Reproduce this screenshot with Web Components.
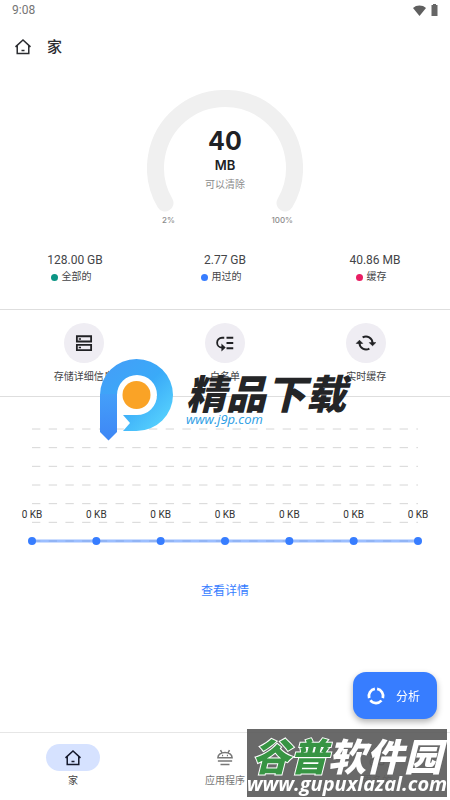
<!DOCTYPE html>
<html lang="zh-CN">
<head>
<meta charset="utf-8">
<meta name="viewport" content="width=device-width, initial-scale=1">
<title>家</title>
<style>
body {
  margin: 0;
  background: #fff;
  color: #444548;
  font-family: Roboto, "Noto Sans CJK SC", sans-serif;
  font-size: 10px;
}
</style>
</head>
<body>
<clean-app></clean-app>

<script>
// icons, all drawn on a 24 grid
const icons = {
  home: '<path d="M2 11.8 12 2.600l10 9.200M4.300 10v10.800h15.400V10M10 16.600h4"/>',
  storage: '<path d="M2.500 3h19v7h-19zM2.500 14.500h19v7h-19z" stroke-width="2.400"/><path d="M5 6.500h3M5 18h3"/>',
  list: '<path d="M14 5h9M14 12h9M14 19h9M11 5H8a6.500 6.500 0 0 0 0 13h1" stroke-width="2.400"/><path d="m8 14.500 3.800 3.500L8 21.500z" fill="currentColor" stroke-width="1.500"/>',
  sync: '<path d="M7.500 4.600A8.700 8.700 0 0 1 20.700 12M16.500 19.400A8.700 8.700 0 0 1 3.300 12" stroke-width="2.600"/><path d="m16.500 11.500 4.200 4.200 4.200-4.200zM-.9 12.500l4.200-4.200 4.200 4.200z" fill="currentColor" stroke-width="1"/>',
  android: '<path d="M2.500 11.500a9.500 7 0 0 1 19 0zM6 1.500l2 3.600M18 1.500l-2 3.600M2.500 16h19M6 20.800h12" stroke-width="2"/><path d="M8 8.500h1.500M14.500 8.500H16"/>',
  more: '<rect x="3" y="3" width="7" height="7" rx="2"/><rect x="14" y="3" width="7" height="7" rx="2"/><rect x="3" y="14" width="7" height="7" rx="2"/><rect x="14" y="14" width="7" height="7" rx="2"/>',
  ring: '<path d="M13.500 2.600A9.500 9.500 0 0 1 21.100 14.700M19.300 18A9.500 9.500 0 0 1 4.500 17.700M2.900 14.800A9.500 9.500 0 0 1 10.500 2.600" stroke-width="3.600"/>'
};

class AppIcon extends HTMLElement {
  constructor() {
    super();
    const shadow = this.attachShadow({ mode: 'open' });
    shadow.innerHTML = `
      <style>
        :host { display: block; width: 18px; height: 18px; }
        svg { display: block; width: 100%; height: 100%; overflow: visible; }
      </style>
      <svg viewBox="0 0 24 24" fill="none" stroke="currentColor" stroke-width="2" aria-hidden="true">${icons[this.getAttribute('name')]}</svg>
    `;
  }
}

class StatusBar extends HTMLElement {
  constructor() {
    super();
    const shadow = this.attachShadow({ mode: 'open' });
    shadow.innerHTML = `
      <style>
        :host {
          display: flex;
          align-items: center;
          justify-content: space-between;
          height: 20px;
          padding: 0 12px;
          color: #757575;
          font-size: 12px;
        }
        div { display: flex; align-items: center; gap: 5px; }
        svg { display: block; }
      </style>
      <span><slot></slot></span>
      <div>
        <svg width="13" height="11" viewBox="0 0 13 11" fill="#5f5f5f"><path d="M0 3C3.500-.3 9.500-.3 13 3L6.500 11z"/></svg>
        <svg width="7" height="12" viewBox="0 0 7 12" fill="#666"><path d="M2 0h3v1h1.500v11h-6V1H2z"/></svg>
      </div>
    `;
  }
}

class PageTitle extends HTMLElement {
  constructor() {
    super();
    const shadow = this.attachShadow({ mode: 'open' });
    shadow.innerHTML = `
      <style>
        :host { display: flex; align-items: center; gap: 15px; height: 54px; padding: 0 14px; color: #2b2c30; }
        h1 { margin: 0; font-size: 15px; font-weight: 500; line-height: 20px; }
      </style>
      <app-icon name="home"></app-icon>
      <h1><slot></slot></h1>
    `;
  }
}

class CleanGauge extends HTMLElement {
  constructor() {
    super();
    const shadow = this.attachShadow({ mode: 'open' });
    shadow.innerHTML = `
      <style>
        :host { display: block; width: 156px; margin: 16px auto 27px; }
        .dial { display: grid; text-align: center; }
        .dial > * { grid-area: 1 / 1; }
        svg { display: block; width: 100%; }
        .value { display: flex; flex-direction: column; padding-top: 35px; }
        .value b { font: 700 25px/32px Inter, sans-serif; color: #202124; }
        .value strong { font: 600 13px/17px Inter, sans-serif; color: #202124; }
        .value span { line-height: 22px; color: #8c8c8c; }
        .range {
          display: flex;
          justify-content: space-between;
          padding: 3px 10px 0 15px;
          font: 500 8px/10px Inter, sans-serif;
          color: #8c8c8c;
        }
      </style>
      <div class="dial">
        <svg viewBox="0 0 156 122" fill="none" stroke="#f0f0f0" stroke-width="17" stroke-linecap="round">
          <path d="M18 113A69.500 69.500 0 1 1 138 113"/>
        </svg>
        <div class="value"><b>40</b><strong>MB</strong><span>可以清除</span></div>
      </div>
      <div class="range"><span>2%</span><span>100%</span></div>
    `;
  }
}

class StorageStat extends HTMLElement {
  constructor() {
    super();
    const shadow = this.attachShadow({ mode: 'open' });
    shadow.innerHTML = `
      <style>
        :host { display: flex; flex-direction: column; align-items: center; gap: 1px; line-height: 16px; }
        .size { font-size: 12px; }
        .name { display: flex; align-items: center; gap: 4px; padding-right: 8px; }
        i { width: 7px; height: 7px; border-radius: 50%; background: var(--dot); }
      </style>
      <span class="size">${this.getAttribute('size')}</span>
      <span class="name"><i></i><slot></slot></span>
    `;
  }
}

class QuickAction extends HTMLElement {
  constructor() {
    super();
    const shadow = this.attachShadow({ mode: 'open' });
    shadow.innerHTML = `
      <style>
        :host { display: grid; justify-items: center; }
        button {
          display: grid;
          justify-items: center;
          gap: 6px;
          padding: 0;
          border: 0;
          background: none;
          color: inherit;
          font: inherit;
          line-height: 16px;
        }
        .disc { display: grid; place-items: center; width: 40px; height: 40px; border-radius: 50%; background: #efedf3; color: #202124; }
      </style>
      <button type="button">
        <span class="disc"><app-icon name="${this.getAttribute('icon')}"></app-icon></span>
        <slot></slot>
      </button>
    `;
  }
}

class UsageChart extends HTMLElement {
  constructor() {
    super();
    const shadow = this.attachShadow({ mode: 'open' });
    const values = this.getAttribute('values').split(',');
    let grid = '';
    let points = '';
    values.forEach((value, i) => {
      const pos = i / (values.length - 1) * 100 + '%';
      grid += `<line x1="0" x2="100%" y1="${pos}" y2="${pos}" pathLength="231" stroke-dasharray="5 5"/>`;
      points += `<circle cx="${pos}" cy="100%" r="4"/><text x="${pos}" y="89">${value} KB</text>`;
    });
    shadow.innerHTML = `
      <style>
        :host { display: block; padding: 32px 32px 0; }
        svg { display: block; width: 100%; height: 112px; overflow: visible; }
        .grid { stroke: #d6d6d6; stroke-width: 1; }
        .series { stroke: #377dff; stroke-opacity: .5; stroke-width: 3; }
        circle { fill: #377dff; }
        text { fill: #333; font-size: 10px; text-anchor: middle; }
      </style>
      <svg>
        <g class="grid">${grid}</g>
        <line class="series" x1="0" x2="100%" y1="100%" y2="100%"/>
        ${points}
      </svg>
    `;
  }
}

class AnalyzeButton extends HTMLElement {
  constructor() {
    super();
    const shadow = this.attachShadow({ mode: 'open' });
    shadow.innerHTML = `
      <style>
        /* floats over the page, just above the bottom bar */
        :host { display: block; position: fixed; right: 13px; bottom: 81px; }
        button {
          display: flex;
          align-items: center;
          gap: 11px;
          height: 47px;
          padding: 0 17px 0 14px;
          border: 0;
          border-radius: 13px;
          background: #377dff;
          box-shadow: 0 3px 6px rgba(0,0,0,.3);
          color: #fff;
          font: inherit;
          font-size: 12px;
        }
      </style>
      <button type="button"><app-icon name="ring"></app-icon><slot></slot></button>
    `;
  }
}

class NavItem extends HTMLElement {
  constructor() {
    super();
    const shadow = this.attachShadow({ mode: 'open' });
    shadow.innerHTML = `
      <style>
        :host { display: block; width: 54px; }
        a { display: grid; gap: 2px; justify-items: center; color: #777; text-decoration: none; line-height: 16px; }
        .pill { display: grid; place-items: center; width: 100%; height: 27px; border-radius: 14px; }
        :host([active]) .pill { background: #d6e2ff; color: #15192c; }
        :host([active]) a { color: #444; }
      </style>
      <a href="#${this.getAttribute('icon')}">
        <span class="pill"><app-icon name="${this.getAttribute('icon')}"></app-icon></span>
        <slot></slot>
      </a>
    `;
  }
}

class SiteStamp extends HTMLElement {
  constructor() {
    super();
    const shadow = this.attachShadow({ mode: 'open' });
    shadow.innerHTML = `
      <style>
        :host { display: flex; gap: 12px; position: absolute; top: 359px; left: calc(50% - 125px); pointer-events: none; }
        svg { display: block; width: 74px; height: 82px; }
        .text { display: flex; flex-direction: column; padding-top: 13px; white-space: nowrap; }
        b { font: italic 900 40px/40px "Noto Sans CJK SC", sans-serif; color: #242527; }
        span { font: italic 500 13px/14px "Open Sans", sans-serif; color: #2b9de5; }
      </style>
      <svg viewBox="0 0 74 82">
        <defs>
          <linearGradient id="blue" x1="0" y1="0" x2="1" y2="1">
            <stop offset="0" stop-color="#459cf8"/>
            <stop offset=".5" stop-color="#3aaaf8"/>
            <stop offset="1" stop-color="#5edcff"/>
          </linearGradient>
          <linearGradient id="stem" x1="0" y1="0" x2="0" y2="1">
            <stop offset="0" stop-color="#449ff9"/>
            <stop offset="1" stop-color="#3e86f5"/>
          </linearGradient>
        </defs>
        <path d="M17 36v20h12c3 0 8 1 14-1a20 20 0 0 0 0-38C30 12 17 22 17 36z" fill="#fff"/>
        <path d="M0 36a36.500 36 0 1 1 36.500 36H23l7-8-7-8h14a20 20 0 1 0-20-20z" fill="url(#blue)"/>
        <path d="M0 35h17v38l-8.500 8.500L0 73z" fill="url(#stem)"/>
        <circle cx="36.500" cy="36" r="14" fill="#faa326"/>
      </svg>
      <div class="text"><b>精品下载</b><span>www.j9p.com</span></div>
    `;
  }
}

class SoftStamp extends HTMLElement {
  constructor() {
    super();
    const shadow = this.attachShadow({ mode: 'open' });
    shadow.innerHTML = `
      <style>
        :host {
          display: flex;
          flex-direction: column;
          align-items: center;
          position: fixed;
          right: 3px;
          bottom: 3px;
          width: 200px;
          padding-top: 7px;
          height: 61px;
          background: rgba(92,92,92,.92);
          color: #fff;
          white-space: nowrap;
          pointer-events: none;
        }
        b { font: italic 900 38px/38px "Noto Sans CJK SC", sans-serif; }
        em { color: #379443; -webkit-text-stroke: 2px #fff; paint-order: stroke fill; }
        span { font: italic 700 20px/20px "Open Sans", sans-serif; }
      </style>
      <b><em>谷普</em>软件园</b>
      <span>www.gupuxlazal.com</span>
    `;
  }
}

class CleanApp extends HTMLElement {
  constructor() {
    super();
    const shadow = this.attachShadow({ mode: 'open' });
    shadow.innerHTML = `
      <style>
        :host { display: flex; flex-direction: column; min-height: 100vh; position: relative; }
        main { flex: 1; }
        .stats { display: grid; grid-template-columns: repeat(3, 1fr); padding-bottom: 24px; }
        .actions {
          display: grid;
          grid-template-columns: repeat(3, 1fr);
          padding: 13px 13px 11px;
          border-top: 1px solid #dedede;
          border-bottom: 1px solid #dedede;
        }
        .details { display: flex; justify-content: center; padding: 40px 0 100px; }
        .details a { color: #377dff; font-size: 12px; line-height: 20px; text-decoration: none; }
        nav {
          display: flex;
          justify-content: space-between;
          position: sticky;
          bottom: 0;
          padding: 11px 46px;
          border-top: 1px solid #e6e6e6;
          background: #fff;
        }
      </style>
      <status-bar>9:08</status-bar>
      <page-title>家</page-title>
      <main>
        <clean-gauge></clean-gauge>
        <section class="stats">
          <storage-stat size="128.00 GB" style="--dot: #0b9584">全部的</storage-stat>
          <storage-stat size="2.77 GB" style="--dot: #377dff">用过的</storage-stat>
          <storage-stat size="40.86 MB" style="--dot: #e91e63">缓存</storage-stat>
        </section>
        <section class="actions">
          <quick-action icon="storage">存储详细信息</quick-action>
          <quick-action icon="list">白名单</quick-action>
          <quick-action icon="sync">实时缓存</quick-action>
        </section>
        <usage-chart values="0,0,0,0,0,0,0"></usage-chart>
        <div class="details"><a href="#details">查看详情</a></div>
      </main>
      <nav>
        <nav-item icon="home" active>家</nav-item>
        <nav-item icon="android">应用程序</nav-item>
        <nav-item icon="more">更多的</nav-item>
      </nav>
      <analyze-button>分析</analyze-button>
      <site-stamp></site-stamp>
      <soft-stamp></soft-stamp>
    `;
  }
}

customElements.define('app-icon', AppIcon);
customElements.define('status-bar', StatusBar);
customElements.define('page-title', PageTitle);
customElements.define('clean-gauge', CleanGauge);
customElements.define('storage-stat', StorageStat);
customElements.define('quick-action', QuickAction);
customElements.define('usage-chart', UsageChart);
customElements.define('analyze-button', AnalyzeButton);
customElements.define('nav-item', NavItem);
customElements.define('site-stamp', SiteStamp);
customElements.define('soft-stamp', SoftStamp);
customElements.define('clean-app', CleanApp);
</script>
</body>
</html>
